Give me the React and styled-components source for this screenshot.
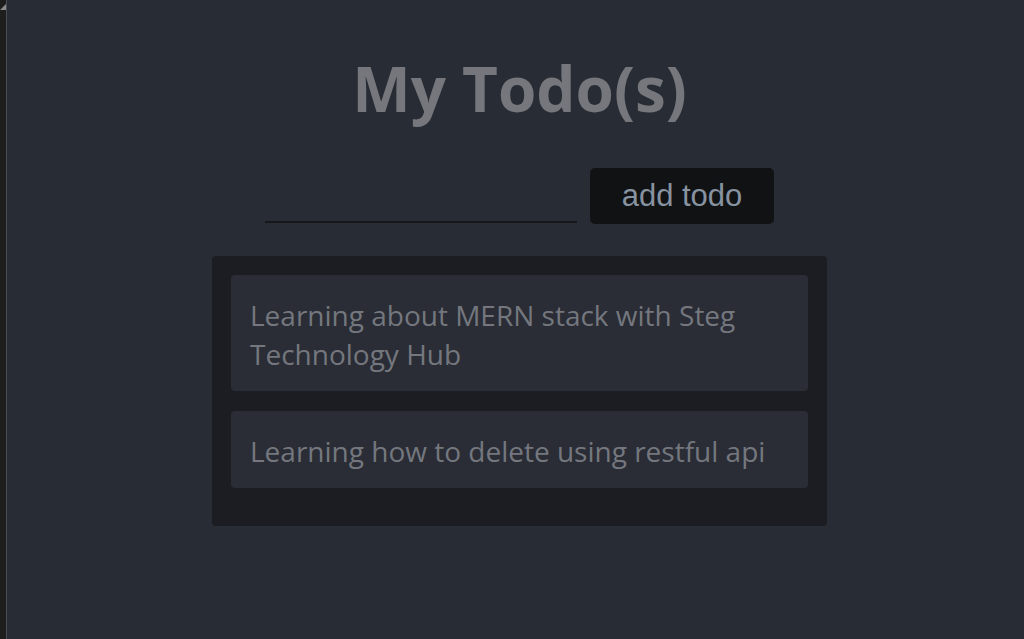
import React, { useState } from 'react';
import styled, { createGlobalStyle } from 'styled-components';

const GlobalStyle = createGlobalStyle`
  html, body {
    margin: 0;
    padding: 0;
    background: #282c34;
  }
  #root {
    min-height: 100vh;
  }
`;

export default function App() {
  const [todo, setTodo] = useState('');
  const [todos, setTodos] = useState([
    { id: 1, text: 'Learning about MERN stack with Steg Technology Hub' },
    { id: 2, text: 'Learning how to delete using restful api' },
  ]);

  const addTodo = () => {
    if (!todo.trim()) return;
    setTodos([...todos, { id: Date.now(), text: todo }]);
    setTodo('');
  };

  return (
    <>
      <GlobalStyle />
      <Screen>
        <Gutter>
          <GutterArrow />
        </Gutter>
        <Main>
          <Title>My Todo(s)</Title>
          <Form>
            <Input value={todo} onChange={(e) => setTodo(e.target.value)} />
            <AddButton onClick={addTodo}>add todo</AddButton>
          </Form>
          <List>
            {todos.map((t) => (
              <Item key={t.id}>{t.text}</Item>
            ))}
          </List>
        </Main>
      </Screen>
    </>
  );
}

const Screen = styled.div`
  display: flex;
  min-height: 100vh;
  background: #282c34;
`;

const Gutter = styled.div`
  width: 6px;
  flex-shrink: 0;
  background: #1e1e1e;
  border-right: 1px solid #4a4d52;
  position: relative;
`;

const GutterArrow = styled.div`
  position: absolute;
  top: 4px;
  left: 0;
  width: 0;
  height: 0;
  border-left: 6px solid transparent;
  border-bottom: 6px solid #8a8a8a;
`;

const Main = styled.div`
  flex: 1;
  display: flex;
  flex-direction: column;
  align-items: center;
  padding-left: 8px;
`;

const Title = styled.h1`
  margin: 48px 0 0;
  font-family: 'Open Sans', 'Noto Sans', sans-serif;
  font-weight: 700;
  font-size: 62px;
  line-height: 80px;
  color: #75777d;
`;

const Form = styled.div`
  display: flex;
  align-items: flex-end;
  gap: 13px;
  margin-top: 40px;
`;

const Input = styled.input`
  width: 312px;
  height: 40px;
  background: transparent;
  border: none;
  border-bottom: 2px solid #15171a;
  outline: none;
  color: #8a8f98;
  font-family: 'Liberation Sans', Arial, sans-serif;
  font-size: 24px;
  padding: 0;
  margin-bottom: 1px;
`;

const AddButton = styled.button`
  width: 184px;
  height: 56px;
  background: #111214;
  border: none;
  border-radius: 5px;
  color: #8793a0;
  font-family: 'Liberation Sans', Arial, sans-serif;
  font-size: 31px;
  cursor: pointer;
`;

const List = styled.div`
  width: 615px;
  box-sizing: border-box;
  margin-top: 32px;
  padding: 19px 19px 38px;
  background: #1b1d22;
  border-radius: 4px;
  display: flex;
  flex-direction: column;
  gap: 20px;
`;

const Item = styled.div`
  background: #2a2d35;
  border-radius: 4px;
  padding: 21px 19px 17px;
  font-family: 'Open Sans', 'Noto Sans', sans-serif;
  font-size: 28px;
  line-height: 39px;
  color: #74777e;
`;
